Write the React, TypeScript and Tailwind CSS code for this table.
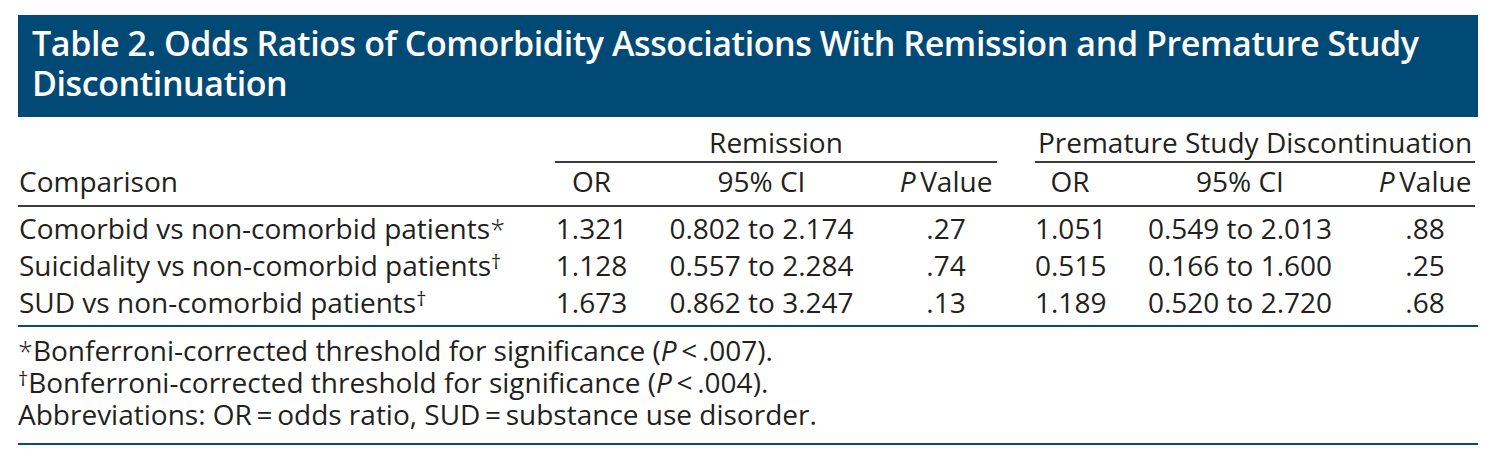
const rows = [
  { label: "Comorbid vs non-comorbid patients", mark: "*", r: ["1.321", "0.802 to 2.174", ".27"], p: ["1.051", "0.549 to 2.013", ".88"] },
  { label: "Suicidality vs non-comorbid patients", mark: "†", r: ["1.128", "0.557 to 2.284", ".74"], p: ["0.515", "0.166 to 1.600", ".25"] },
  { label: "SUD vs non-comorbid patients", mark: "†", r: ["1.673", "0.862 to 3.247", ".13"], p: ["1.189", "0.520 to 2.720", ".68"] },
]

// footnote marks: thin asterisk near cap height, the dagger is a raised smaller glyph
function Mark({ children }: { children: string }) {
  if (children === "*") {
    return <span className="relative top-[1px] text-[27px] font-light leading-[0]">*</span>
  }
  return <span className="relative -top-[7px] text-[20px] leading-[0]">{children}</span>
}

export default function App() {
  return (
    <div className="bg-white w-[1501px] h-[468px] pt-[15px] pl-[18px] text-[#231f20]" style={{ fontFamily: "'Open Sans', sans-serif" }}>
      <div className="w-[1460px]">
        <div className="h-[102px] bg-[#024a76] pl-[14px] pt-[8px] text-white text-[34px] leading-[40px] font-semibold tracking-[-0.4px] whitespace-nowrap">
          Table 2. Odds Ratios of Comorbidity Associations With Remission and Premature Study
          <br />
          Discontinuation
        </div>

        <div className="grid grid-cols-[537px_73px_267px_102px_38px_70px_270px_100px_3px] text-[28px] leading-[37px]">
          {/* group headers */}
          <div />
          <div className="col-span-3 pt-[7px] h-[46px] text-center border-b-2 border-[#3c3c3c]">Remission</div>
          <div />
          <div className="col-span-3 pt-[7px] h-[46px] text-center border-b-2 border-[#3c3c3c] whitespace-nowrap">Premature Study Discontinuation</div>
          <div />

          {/* column headers */}
          <div className="pl-[1px] h-[44px] border-b-2 border-[#3c3c3c]">Comparison</div>
          <div className="h-[44px] text-center border-b-2 border-[#3c3c3c]">OR</div>
          <div className="h-[44px] text-center border-b-2 border-[#3c3c3c]">95% CI</div>
          <div className="h-[44px] text-center border-b-2 border-[#3c3c3c] whitespace-nowrap"><i>P</i>&thinsp;Value</div>
          <div className="h-[44px] border-b-2 border-[#3c3c3c]" />
          <div className="h-[44px] text-center border-b-2 border-[#3c3c3c]">OR</div>
          <div className="h-[44px] text-center border-b-2 border-[#3c3c3c]">95% CI</div>
          <div className="h-[44px] text-center border-b-2 border-[#3c3c3c] whitespace-nowrap"><i>P</i>&thinsp;Value</div>
          <div />
        </div>

        <div className="pt-[3px] pb-[4px] border-b-2 border-[#0b4a7a] text-[28px] leading-[37px]">
          {rows.map((row) => (
            <div key={row.label} className="grid grid-cols-[537px_73px_267px_102px_38px_70px_270px_100px_3px]">
              <div className="pl-[1px] whitespace-nowrap">
                {row.label}
                <Mark>{row.mark}</Mark>
              </div>
              <div className="text-center">{row.r[0]}</div>
              <div className="text-center">{row.r[1]}</div>
              <div className="text-center">{row.r[2]}</div>
              <div />
              <div className="text-center">{row.p[0]}</div>
              <div className="text-center">{row.p[1]}</div>
              <div className="text-center">{row.p[2]}</div>
              <div />
            </div>
          ))}
        </div>

        <div className="pt-[7px] pb-[13px] border-b-2 border-[#0b4a7a] text-[28px] leading-[32px]">
          <p>
            <Mark>*</Mark>Bonferroni-corrected threshold for significance (<i>P</i>&thinsp;&lt;&thinsp;.007).
          </p>
          <p>
            <Mark>†</Mark>Bonferroni-corrected threshold for significance (<i>P</i>&thinsp;&lt;&thinsp;.004).
          </p>
          <p>Abbreviations: OR&thinsp;=&thinsp;odds ratio, SUD&thinsp;=&thinsp;substance use disorder.</p>
        </div>
      </div>
    </div>
  )
}
